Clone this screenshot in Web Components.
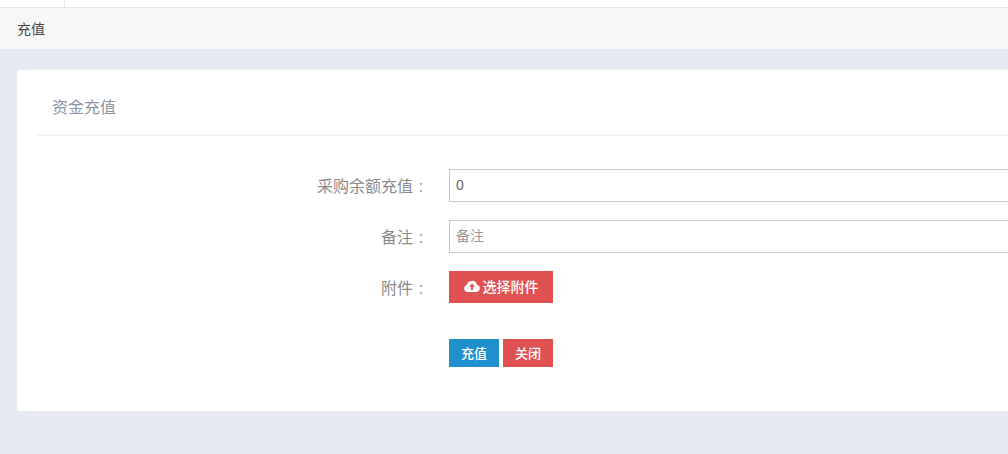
<!DOCTYPE html>
<html lang="zh">
<head>
<meta charset="utf-8">
<title>充值</title>
<style>
  html, body { margin: 0; height: 100%; overflow: hidden; background: #e7eaf2; }
  body { font-family: "Liberation Sans", "Noto Sans CJK SC", sans-serif; }
</style>
</head>
<body>
<top-bar></top-bar>
<tab-bar>充值</tab-bar>
<page-content>
  <form-card heading="资金充值">
    <form-row label="采购余额充值"><text-field value="0"></text-field></form-row>
    <form-row label="备注"><text-field placeholder="备注"></text-field></form-row>
    <form-row label="附件">
      <red-button big>
        <svg width="16" height="12" viewBox="0 0 16 12"><path fill="#fff" fill-rule="evenodd" d="M4 12a3.600 3.600 0 0 1-1-7.100A4 4 0 0 1 6.700 1.200 4.400 4.400 0 0 1 12.900 4.700 3.700 3.700 0 0 1 12.300 12ZM8 3.600 5 6.700h2V10h2V6.700h2Z"/></svg>
        选择附件
      </red-button>
    </form-row>
    <form-row class="actions">
      <red-button color="#1f8fce">充值</red-button>
      <red-button>关闭</red-button>
    </form-row>
  </form-card>
</page-content>

<script>
class TopBar extends HTMLElement {
  constructor() {
    super();
    this.attachShadow({ mode: 'open' });
    this.shadowRoot.innerHTML = `
      <style>
        :host { display: block; height: 7px; background: #fff; border-bottom: 1px solid #e7e7e7; }
        .sep { width: 64px; height: 7px; border-right: 1px solid #e7e7e7; }
      </style>
      <div class="sep"></div>`;
  }
}

class TabBar extends HTMLElement {
  constructor() {
    super();
    this.attachShadow({ mode: 'open' });
    this.shadowRoot.innerHTML = `
      <style>
        :host {
          display: flex; align-items: center; height: 41px; padding: 0 0 2px 17px; box-sizing: border-box;
          background: #f7f7f7; color: #444; font-size: 14px;
        }
      </style>
      <slot></slot>`;
  }
}

class PageContent extends HTMLElement {
  constructor() {
    super();
    this.attachShadow({ mode: 'open' });
    this.shadowRoot.innerHTML = `
      <style>
        :host { display: block; padding: 21px 0 0 17px; width: 1200px; }
      </style>
      <slot></slot>`;
  }
}

class FormCard extends HTMLElement {
  constructor() {
    super();
    this.attachShadow({ mode: 'open' });
    this.shadowRoot.innerHTML = `
      <style>
        :host { display: block; height: 341px; background: #fff; border-radius: 4px; padding: 0 0 0 20px; box-sizing: border-box; }
        h3 {
          margin: 0; height: 66px; line-height: 75px; padding-left: 15px; box-sizing: border-box;
          font-size: 16px; font-weight: 400; color: #8c94a3; border-bottom: 1px solid #eee;
        }
        .body { padding-top: 33px; }
      </style>
      <h3>${this.getAttribute('heading')}</h3>
      <div class="body"><slot></slot></div>`;
  }
}

class FormRow extends HTMLElement {
  constructor() {
    super();
    this.attachShadow({ mode: 'open' });
    const label = this.getAttribute('label');
    this.shadowRoot.innerHTML = `
      <style>
        :host { display: flex; margin-bottom: 18px; }
        :host(.actions) { margin-top: 35px; margin-bottom: 0; }
        label {
          width: 412px; height: 33px; line-height: 36px; padding-right: 20px; box-sizing: border-box;
          text-align: right; font-size: 16px; color: #8a8a8a; flex: none;
        }
        .colon { display: inline-block; width: 16px; text-align: center; }
        .ctl { display: flex; gap: 4px; flex: 1; }
      </style>
      <label>${label ? `${label}<span class="colon">:</span>` : ''}</label>
      <div class="ctl"><slot></slot></div>`;
  }
}

class TextField extends HTMLElement {
  constructor() {
    super();
    this.attachShadow({ mode: 'open' });
    this.shadowRoot.innerHTML = `
      <style>
        :host { display: block; flex: 1; }
        input {
          display: block; width: 100%; height: 33px; box-sizing: border-box; padding: 0 6px 2px;
          border: 1px solid #c2cad8; border-radius: 0; outline: 0;
          font: 14px "Liberation Sans", "Noto Sans CJK SC", sans-serif; color: #666;
        }
        input::placeholder { color: #999; opacity: 1; }
      </style>
      <input>`;
    const input = this.shadowRoot.querySelector('input');
    input.value = this.getAttribute('value') || '';
    input.placeholder = this.getAttribute('placeholder') || '';
  }
}

class RedButton extends HTMLElement {
  constructor() {
    super();
    this.attachShadow({ mode: 'open' });
    this.shadowRoot.innerHTML = `
      <style>
        :host {
          display: inline-flex; align-items: center; justify-content: center; gap: 3px;
          width: 50px; height: 28px; padding-bottom: 2px; box-sizing: border-box;
          background: var(--bg, #e05252); color: #fff;
          font-size: 13px; font-weight: 500; cursor: pointer;
        }
        :host([big]) { width: 104px; height: 32px; font-size: 14px; }
      </style>
      <slot></slot>`;
    if (this.hasAttribute('color')) this.style.setProperty('--bg', this.getAttribute('color'));
  }
}

customElements.define('top-bar', TopBar);
customElements.define('tab-bar', TabBar);
customElements.define('page-content', PageContent);
customElements.define('form-card', FormCard);
customElements.define('form-row', FormRow);
customElements.define('text-field', TextField);
customElements.define('red-button', RedButton);
</script>
</body>
</html>
